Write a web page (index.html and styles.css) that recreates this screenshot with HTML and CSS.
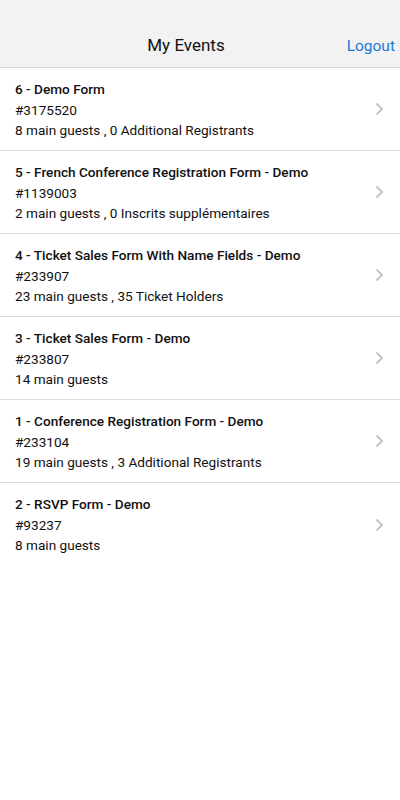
FILE: index.html
```html
<!DOCTYPE html>
<html>
<head>
<meta charset="utf-8">
<link rel="stylesheet" href="styles.css">
</head>
<body>
<header class="navbar">
  <div class="nav-title">My Events</div>
  <a class="nav-logout">Logout</a>
</header>
<ul class="events">
  <li class="event">
    <div class="event-info">
      <div class="event-name">6 - Demo Form</div>
      <div class="event-line">#3175520</div>
      <div class="event-line">8 main guests , 0 Additional Registrants</div>
    </div>
    <svg class="chevron" width="9" height="14" viewBox="0 0 9 14"><path d="M1.5 1.5 L7 7 L1.5 12.5" fill="none" stroke="#c4c4c4" stroke-width="2"/></svg>
  </li>
  <li class="event">
    <div class="event-info">
      <div class="event-name">5 - French Conference Registration Form - Demo</div>
      <div class="event-line">#1139003</div>
      <div class="event-line">2 main guests , 0 Inscrits supplémentaires</div>
    </div>
    <svg class="chevron" width="9" height="14" viewBox="0 0 9 14"><path d="M1.5 1.5 L7 7 L1.5 12.5" fill="none" stroke="#c4c4c4" stroke-width="2"/></svg>
  </li>
  <li class="event">
    <div class="event-info">
      <div class="event-name">4 - Ticket Sales Form With Name Fields - Demo</div>
      <div class="event-line">#233907</div>
      <div class="event-line">23 main guests , 35 Ticket Holders</div>
    </div>
    <svg class="chevron" width="9" height="14" viewBox="0 0 9 14"><path d="M1.5 1.5 L7 7 L1.5 12.5" fill="none" stroke="#c4c4c4" stroke-width="2"/></svg>
  </li>
  <li class="event">
    <div class="event-info">
      <div class="event-name">3 - Ticket Sales Form - Demo</div>
      <div class="event-line">#233807</div>
      <div class="event-line">14 main guests</div>
    </div>
    <svg class="chevron" width="9" height="14" viewBox="0 0 9 14"><path d="M1.5 1.5 L7 7 L1.5 12.5" fill="none" stroke="#c4c4c4" stroke-width="2"/></svg>
  </li>
  <li class="event">
    <div class="event-info">
      <div class="event-name">1 - Conference Registration Form - Demo</div>
      <div class="event-line">#233104</div>
      <div class="event-line">19 main guests , 3 Additional Registrants</div>
    </div>
    <svg class="chevron" width="9" height="14" viewBox="0 0 9 14"><path d="M1.5 1.5 L7 7 L1.5 12.5" fill="none" stroke="#c4c4c4" stroke-width="2"/></svg>
  </li>
  <li class="event last">
    <div class="event-info">
      <div class="event-name">2 - RSVP Form - Demo</div>
      <div class="event-line">#93237</div>
      <div class="event-line">8 main guests</div>
    </div>
    <svg class="chevron" width="9" height="14" viewBox="0 0 9 14"><path d="M1.5 1.5 L7 7 L1.5 12.5" fill="none" stroke="#c4c4c4" stroke-width="2"/></svg>
  </li>
</ul>
</body>
</html>
```
FILE: styles.css
```css
* { box-sizing: border-box; }
html, body { margin: 0; padding: 0; background: #fff; }
body { font-family: Roboto, "Noto Sans", sans-serif; color: #000; }
.navbar {
  height: 68px;
  background: #f2f2f2;
  border-bottom: 1px solid #d6d6d6;
  display: flex;
  align-items: flex-end;
  justify-content: center;
  position: relative;
  padding: 0 28px 12px 0;
}
.nav-title { font-size: 17px; line-height: 20px; color: #111; }
.nav-logout {
  position: absolute;
  right: 5px;
  bottom: 11px;
  font-size: 15.5px;
  line-height: 20px;
  color: #1a7ad6;
}
.events { list-style: none; margin: 0; padding: 0; }
.event {
  height: 83px;
  border-bottom: 1px solid #dcdcdc;
  display: flex;
  align-items: flex-start;
  padding: 11px 16px 0 15px;
}
.event.last { border-bottom: none; }
.event-info { flex: 1; }
.event-name { font-size: 13.6px; font-weight: 500; line-height: 20.5px; color: #111; }
.event-line { font-size: 13.6px; line-height: 20.5px; color: #111; }
.chevron { flex: none; align-self: center; margin-top: -11px; }
```
